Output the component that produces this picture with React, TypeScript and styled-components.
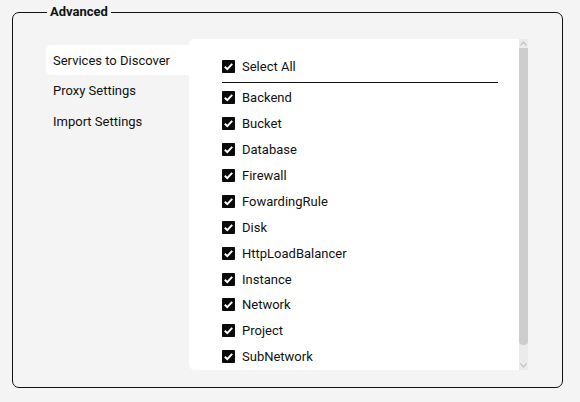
import React, { FC, useState } from 'react';
import styled, { createGlobalStyle } from 'styled-components';

const GlobalStyle = createGlobalStyle`
  html, body {
    margin: 0;
    padding: 0;
    background: #f4f4f4;
    font-family: Roboto, 'Liberation Sans', Arial, sans-serif;
    color: #111;
  }
`;

const Page = styled.div`
  padding: 4px 0 0 12px;
  width: 580px;
  height: 402px;
  box-sizing: border-box;
`;

const Group = styled.fieldset`
  width: 551px;
  height: 384px;
  box-sizing: border-box;
  margin: 0;
  padding: 0 0 16px 33px;
  border: 1px solid #111;
  border-radius: 7px;
  display: flex;
  align-items: flex-start;
`;

const Legend = styled.legend`
  padding: 0 3px;
  margin-left: 1px;
  font-size: 13px;
  line-height: 16px;
  font-weight: 700;
  color: #111;
`;

const Body = styled.div`
  display: flex;
  align-items: flex-start;
  margin-top: 19px;
`;

const Tabs = styled.div`
  display: flex;
  flex-direction: column;
  width: 143px;
  margin-top: 6px;
`;

const Tab = styled.div<{ $active?: boolean }>`
  height: ${(p) => (p.$active ? '30px' : '31px')};
  width: 144px;
  display: flex;
  align-items: center;
  padding-left: 7px;
  padding-top: ${(p) => (p.$active ? '1px' : '0')};
  box-sizing: border-box;
  font-size: 13px;
  color: #111;
  background: ${(p) => (p.$active ? '#fff' : 'transparent')};
  border-radius: 5px 0 0 5px;
  cursor: pointer;
`;

const Panel = styled.div`
  display: flex;
  width: 339px;
  height: 331px;
  background: #fff;
  border-radius: 6px 0 0 6px;
`;

const List = styled.div`
  flex: 1;
  overflow: hidden;
  padding: 15px 21px 15px 33px;
  display: flex;
  flex-direction: column;
`;

const Row = styled.label`
  height: 25.9px;
  display: flex;
  align-items: center;
  gap: 7px;
  font-size: 13px;
  color: #111;
  flex-shrink: 0;
  cursor: pointer;
`;

const Divider = styled.div`
  height: 1px;
  background: #111;
  margin: 2px 0 2px;
  flex-shrink: 0;
`;

const Scrollbar = styled.div`
  width: 9px;
  display: flex;
  flex-direction: column;
  background: #ebebeb;
`;

const Arrow = styled.div`
  height: 9px;
  display: flex;
  align-items: center;
  justify-content: center;
`;

const Thumb = styled.div`
  height: 297px;
  background: #cdcdcd;
  border-radius: 0 0 4px 4px;
`;

const Track = styled.div`
  flex: 1;
`;

const Box: FC<{ checked: boolean }> = ({ checked }) => (
  <svg width="13" height="13" viewBox="0 0 13 13">
    <rect x="0" y="0" width="13" height="13" rx="2" fill={checked ? '#0a0a0a' : '#fff'} stroke="#0a0a0a" />
    {checked && (
      <path d="M2.8 6.7 L5.3 9.1 L10.2 3.9" stroke="#fff" strokeWidth="2" fill="none" />
    )}
  </svg>
);

const services = [
  'Backend',
  'Bucket',
  'Database',
  'Firewall',
  'FowardingRule',
  'Disk',
  'HttpLoadBalancer',
  'Instance',
  'Network',
  'Project',
  'SubNetwork',
];

const tabs = ['Services to Discover', 'Proxy Settings', 'Import Settings'];

export default function App() {
  const [active, setActive] = useState(0);
  const [checked, setChecked] = useState<string[]>(services);
  const all = checked.length === services.length;

  const toggle = (s: string) =>
    setChecked((c) => (c.includes(s) ? c.filter((x) => x !== s) : [...c, s]));

  return (
    <>
      <GlobalStyle />
      <Page>
        <Group>
          <Legend>Advanced</Legend>
          <Body>
            <Tabs>
              {tabs.map((t, i) => (
                <Tab key={t} $active={i === active} onClick={() => setActive(i)}>
                  {t}
                </Tab>
              ))}
            </Tabs>
            <Panel>
              <List>
                <Row onClick={() => setChecked(all ? [] : services)}>
                  <Box checked={all} />
                  Select All
                </Row>
                <Divider />
                {services.map((s) => (
                  <Row key={s} onClick={() => toggle(s)}>
                    <Box checked={checked.includes(s)} />
                    {s}
                  </Row>
                ))}
              </List>
              <Scrollbar>
                <Arrow>
                  <svg width="7" height="5" viewBox="0 0 7 5">
                    <path d="M0.5 4.5 L3.5 1 L6.5 4.5" stroke="#c4c4c4" strokeWidth="1.2" fill="none" />
                  </svg>
                </Arrow>
                <Thumb />
                <Track />
                <Arrow>
                  <svg width="7" height="5" viewBox="0 0 7 5">
                    <path d="M0.5 0.5 L3.5 4 L6.5 0.5" stroke="#c4c4c4" strokeWidth="1.2" fill="none" />
                  </svg>
                </Arrow>
              </Scrollbar>
            </Panel>
          </Body>
        </Group>
      </Page>
    </>
  );
}
